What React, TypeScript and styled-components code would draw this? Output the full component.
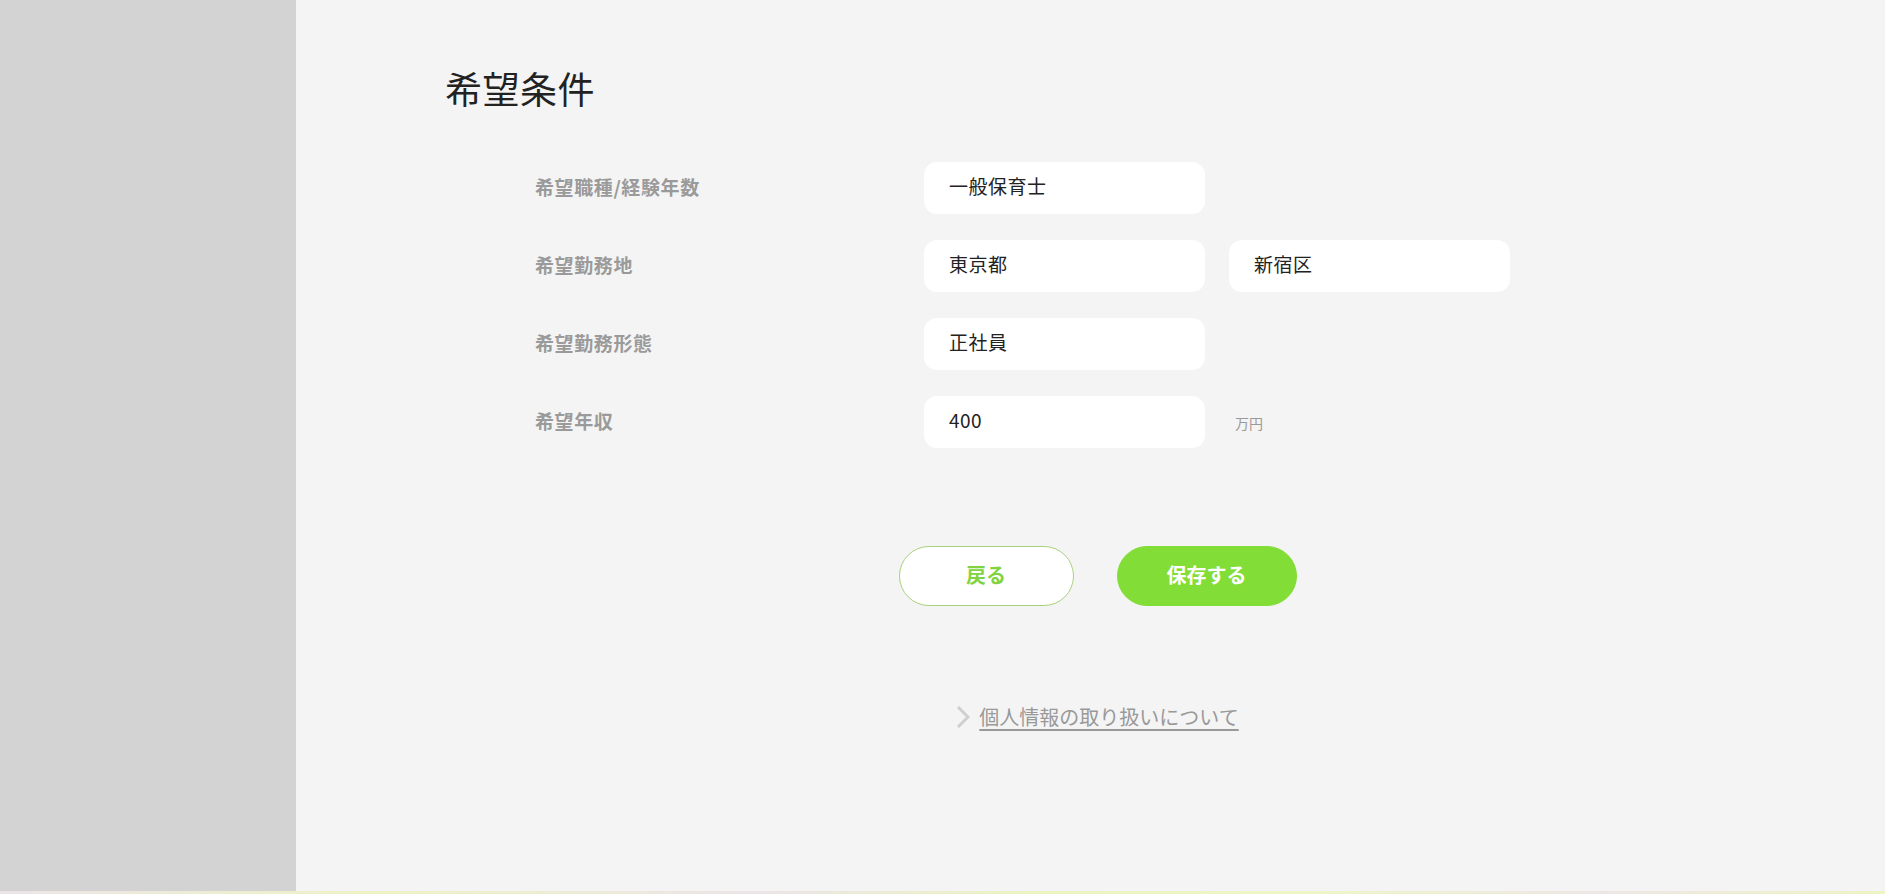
import React, { FC } from 'react';
import styled, { createGlobalStyle } from 'styled-components';

const GlobalStyle = createGlobalStyle`
    html, body {
        margin: 0;
        padding: 0;
        background: #f4f4f4;
        font-family: "Noto Sans CJK JP", "Noto Sans", sans-serif;
    }
    * { box-sizing: border-box; }
`;

const Page = styled.div`
    display: flex;
    flex-direction: column;
    height: 894px;
`;

const Body = styled.div`
    display: flex;
    flex: 1;
`;

const Sidebar = styled.aside`
    width: 296px;
    flex-shrink: 0;
    background: #d3d3d3;
`;

const Main = styled.main`
    flex: 1;
    background: #f4f4f4;
    padding: 66px 0 0 149px;
`;

const Container = styled.div`
    width: 1305px;
`;

const Title = styled.h1`
    margin: 0;
    font-size: 37px;
    line-height: 44px;
    font-weight: 400;
    letter-spacing: 0.5px;
    color: #222;
`;

const Fields = styled.div`
    margin-top: 52px;
    padding-left: 90px;
    display: flex;
    flex-direction: column;
    gap: 26px;
`;

const Row = styled.div`
    display: flex;
    align-items: center;
    height: 52px;
`;

const Label = styled.div`
    width: 389px;
    padding-bottom: 4px;
    font-size: 19px;
    font-weight: 700;
    letter-spacing: 0.6px;
    color: #9a9a9a;
`;

const Inputs = styled.div`
    display: flex;
    align-items: center;
    gap: 24px;
`;

const Field = styled.input`
    width: 281px;
    height: 52px;
    border: none;
    border-radius: 13px;
    background: #fff;
    padding: 0 25px 5px;
    font-family: inherit;
    font-size: 19px;
    letter-spacing: 0.5px;
    color: #222;
    outline: none;
`;

const Unit = styled.span`
    margin-left: 6px;
    font-size: 14px;
    color: #999;
    padding-top: 1px;
`;

const Actions = styled.div`
    margin-top: 98px;
    display: flex;
    justify-content: center;
    gap: 43px;
`;

const Button = styled.button<{ $primary?: boolean }>`
    width: ${(p) => (p.$primary ? '180px' : '175px')};
    height: 60px;
    padding: 0 0 4px;
    border-radius: 30px;
    border: 1px solid ${(p) => (p.$primary ? '#82dd37' : '#a9d27c')};
    background: ${(p) => (p.$primary ? '#82dd37' : '#fff')};
    color: ${(p) => (p.$primary ? '#fff' : '#82d340')};
    font-family: inherit;
    font-size: 20px;
    font-weight: 700;
    cursor: pointer;
`;

const LinkRow = styled.div`
    margin-top: 99px;
    display: flex;
    justify-content: center;
`;

const PolicyLink = styled.a`
    display: flex;
    align-items: center;
    gap: 9px;
    font-size: 20px;
    line-height: 24px;
    color: #999;
    text-decoration: underline;
    text-underline-offset: 4px;
    cursor: pointer;
`;

const Stripe = styled.div`
    height: 3px;
    background: linear-gradient(90deg, #ece4e8 0%, #eef3c4 20%, #ece4e8 40%, #ecf4c0 55%, #eef5c8 70%, #eee6e6 85%, #eef4c4 100%);
`;

type FieldDef = { label: string; values: string[]; unit?: string };

const fields: FieldDef[] = [
    { label: '希望職種/経験年数', values: ['一般保育士'] },
    { label: '希望勤務地', values: ['東京都', '新宿区'] },
    { label: '希望勤務形態', values: ['正社員'] },
    { label: '希望年収', values: ['400'], unit: '万円' },
];

const App: FC = () => {
    return (
        <Page>
            <GlobalStyle />
            <Body>
                <Sidebar />
                <Main>
                    <Container>
                        <Title>希望条件</Title>
                        <Fields>
                            {fields.map((f) => (
                                <Row key={f.label}>
                                    <Label>{f.label}</Label>
                                    <Inputs>
                                        {f.values.map((v) => (
                                            <Field key={v} defaultValue={v} readOnly />
                                        ))}
                                        {f.unit && <Unit>{f.unit}</Unit>}
                                    </Inputs>
                                </Row>
                            ))}
                        </Fields>
                        <Actions>
                            <Button>戻る</Button>
                            <Button $primary>保存する</Button>
                        </Actions>
                        <LinkRow>
                            <PolicyLink>
                                <svg width="14" height="24" viewBox="0 0 14 24">
                                    <path d="M2 2 L12 12 L2 22" fill="none" stroke="#cfcfcf" strokeWidth="3" />
                                </svg>
                                個人情報の取り扱いについて
                            </PolicyLink>
                        </LinkRow>
                    </Container>
                </Main>
            </Body>
            <Stripe />
        </Page>
    );
};

export default App;
